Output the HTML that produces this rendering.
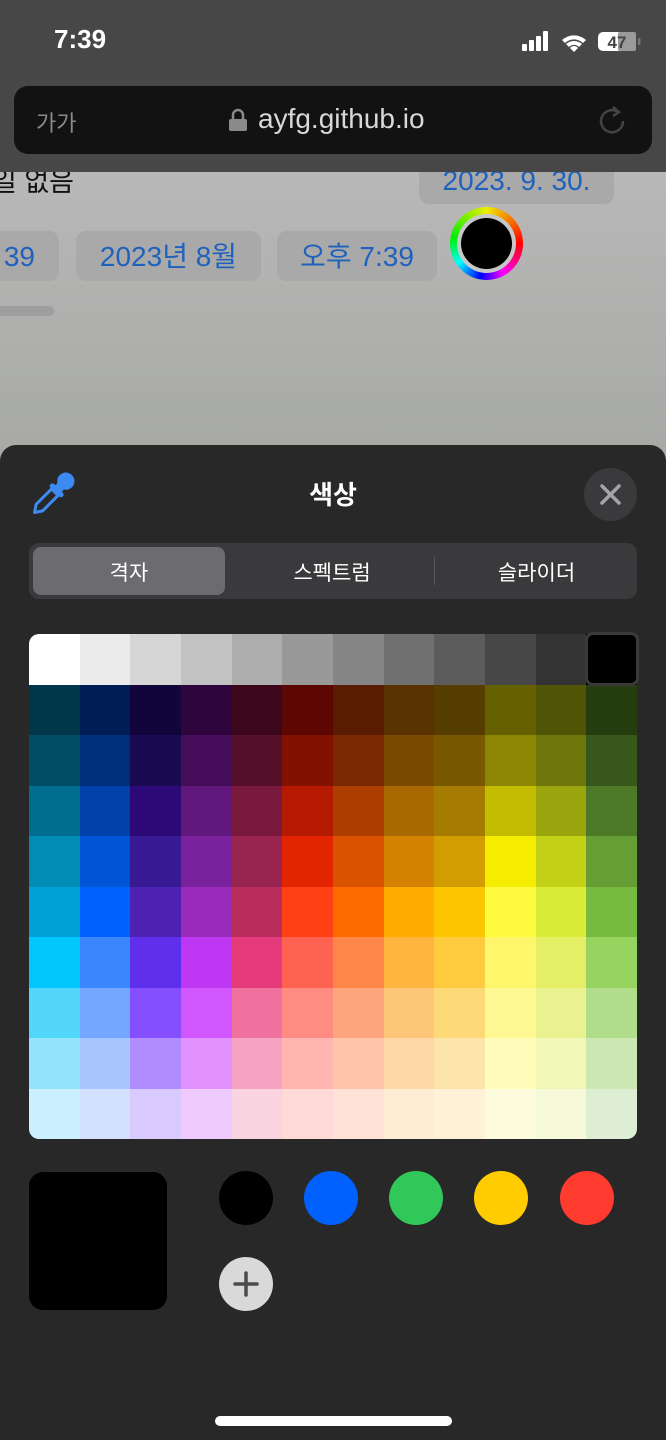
<!DOCTYPE html>
<html><head><meta charset="utf-8">
<style>
*{margin:0;padding:0;box-sizing:border-box}
body{width:666px;height:1440px;overflow:hidden;position:relative;background:#282828;font-family:"Liberation Sans","Noto Sans CJK KR",sans-serif}
.abs{position:absolute}
.btn{position:absolute;background:#a9a9a9;border-radius:10px;color:#1f62bd;font-size:28px;text-align:center}
#grid{position:absolute;left:29px;top:634px;width:608px;height:505px;border-radius:10px;overflow:hidden;display:grid;grid-template-columns:repeat(12,1fr);grid-template-rows:repeat(10,1fr)}
.c{position:absolute;width:54px;height:54px;border-radius:50%;top:1171px}
</style></head><body>
<div class="abs" style="left:0;top:172px;width:666px;height:290px;background:linear-gradient(#b8b8b8,#a7a9a5)"></div>
<div class="abs" style="left:-8px;top:160px;color:#111;font-size:27px">일 없음</div>
<div class="btn" style="left:419px;top:150px;width:195px;height:54px;line-height:62px">2023. 9. 30.</div>
<div class="btn" style="left:-20px;top:231px;width:79px;height:50px;line-height:52px;text-align:right;padding-right:24px">39</div>
<div class="btn" style="left:76px;top:231px;width:185px;height:50px;line-height:52px">2023년 8월</div>
<div class="btn" style="left:277px;top:231px;width:160px;height:50px;line-height:52px">오후 7:39</div>
<div class="abs" style="left:450px;top:207px;width:73px;height:73px;border-radius:50%;background:conic-gradient(#ee0 0deg,#f00 90deg,#f0f 150deg,#00f 190deg,#0ff 235deg,#0e0 280deg,#ee0 360deg)"></div>
<div class="abs" style="left:457px;top:214px;width:59px;height:59px;border-radius:50%;background:#c8c8c8"></div>
<div class="abs" style="left:461px;top:218px;width:51px;height:51px;border-radius:50%;background:#000"></div>
<div class="abs" style="left:-5px;top:306px;width:59px;height:10px;border-radius:5px;background:#9e9e9e"></div>
<div class="abs" style="left:0;top:0;width:666px;height:172px;background:#474747"></div>
<div class="abs" style="left:54px;top:24px;color:#fff;font-size:26px;font-weight:bold">7:39</div>
<svg class="abs" style="left:520px;top:30px" width="125" height="24" viewBox="0 0 125 24">
<rect x="2" y="14" width="5" height="7" rx="1" fill="#fff"/><rect x="9" y="10" width="5" height="11" rx="1" fill="#fff"/><rect x="16" y="6" width="5" height="15" rx="1" fill="#fff"/><rect x="23" y="1" width="5" height="20" rx="1" fill="#fff"/>
<path d="M42 10a18 18 0 0 1 24 0l-3 3a13 13 0 0 0-18 0zM46 14a12 12 0 0 1 16 0l-3 3a7 7 0 0 0-10 0zM50 18a5 5 0 0 1 8 0l-4 4z" fill="#fff"/>
<rect x="78" y="2" width="38" height="19" rx="5" fill="#fff"/><rect x="98" y="2" width="18" height="19" rx="2" fill="#9a9a9a"/><rect x="118" y="8" width="2.5" height="7" rx="1" fill="#777"/>
<text x="97" y="18" text-anchor="middle" font-size="17" font-weight="bold" fill="#444" font-family="Liberation Sans">47</text>
</svg>
<div class="abs" style="left:14px;top:86px;width:638px;height:68px;background:#121212;border-radius:14px"></div>
<div class="abs" style="left:36px;top:106px;color:#8a8a8a;font-size:22px">가가</div>
<svg class="abs" style="left:228px;top:108px" width="20" height="24"><path d="M5 11V7a5 5 0 0 1 10 0v4" stroke="#8a8a8a" stroke-width="2.5" fill="none"/><rect x="1" y="11" width="18" height="12" rx="2" fill="#8a8a8a"/></svg>
<div class="abs" style="left:258px;top:103px;color:#d8d8d8;font-size:28px">ayfg.github.io</div>
<svg class="abs" style="left:596px;top:104px" width="32" height="32"><path d="M22 8a11 11 0 1 0 5 9" stroke="#444" stroke-width="2.5" fill="none"/><path d="M17 3l6 5-6 4" stroke="#444" stroke-width="2.5" fill="none"/></svg>
<div class="abs" style="left:0;top:445px;width:666px;height:995px;background:#282828;border-radius:16px 16px 0 0"></div>
<svg class="abs" style="left:0;top:445px" width="100" height="100" viewBox="0 445 100 100">
<g transform="translate(52,495) rotate(45) scale(1.15)" fill="#3d8bf0">
<circle cx="0" cy="-17" r="7.5"/>
<rect x="-4" y="-14" width="8" height="8"/>
<rect x="-7.5" y="-8" width="15" height="4.5" rx="2"/>
<path d="M-4-3.5h8v19l-4 6-4-6z" fill="none" stroke="#3d8bf0" stroke-width="2.6" stroke-linejoin="round"/>
</g>
</svg>
<div class="abs" style="left:0;top:475px;width:666px;text-align:center;color:#fff;font-size:26px;font-weight:bold">색상</div>
<div class="abs" style="left:584px;top:468px;width:53px;height:53px;border-radius:50%;background:#3a3a3c"></div>
<svg class="abs" style="left:584px;top:468px" width="53" height="53"><path d="M18 18l17 17M35 18L18 35" stroke="#a4a4a8" stroke-width="3.5" stroke-linecap="round"/></svg>
<div class="abs" style="left:29px;top:543px;width:608px;height:56px;background:#3a3a3c;border-radius:10px"></div>
<div class="abs" style="left:33px;top:547px;width:192px;height:48px;background:#6c6c70;border-radius:8px"></div>
<div class="abs" style="left:434px;top:557px;width:1px;height:28px;background:#5a5a5e"></div>
<div class="abs" style="left:33px;top:557px;width:192px;text-align:center;color:#fff;font-size:21px">격자</div>
<div class="abs" style="left:230px;top:557px;width:204px;text-align:center;color:#fff;font-size:21px">스펙트럼</div>
<div class="abs" style="left:436px;top:557px;width:201px;text-align:center;color:#fff;font-size:21px">슬라이더</div>
<div id="grid"></div>
<div class="abs" style="left:585px;top:632px;width:54px;height:54px;border:3px solid #3a3a3a;border-radius:8px;background:#000"></div>
<div class="abs" style="left:29px;top:1172px;width:138px;height:138px;background:#000;border-radius:14px"></div>
<div class="c" style="left:219px;background:#000"></div>
<div class="c" style="left:304px;background:#0061fe"></div>
<div class="c" style="left:389px;background:#32c759"></div>
<div class="c" style="left:474px;background:#ffcc02"></div>
<div class="c" style="left:560px;background:#ff3b30"></div>
<div class="c" style="left:219px;top:1257px;background:#d9d9d9"></div>
<svg class="abs" style="left:219px;top:1257px" width="54" height="54"><path d="M27 16v22M16 27h22" stroke="#4a4a4a" stroke-width="3.5" stroke-linecap="round"/></svg>
<div class="abs" style="left:215px;top:1416px;width:237px;height:10px;border-radius:5px;background:#fff"></div>
<script>
var cols="fff ebebeb d6d6d6 c2c2c2 adadad 999999 858585 707070 5c5c5c 474747 333333 000000 00374a 011d57 11053b 2e063d 3c071b 5c0701 5a1c00 583300 563d00 666100 4f5504 263e0f 004d65 012f7b 1a0a52 450d59 551029 831100 7b2900 7a4a00 785800 8c8602 6f760a 38571a 016e8f 0042a9 2c0977 61187c 791a3d b51a00 ad3e00 a96800 a67b01 c4bc00 9ba50e 4e7a27 008cb4 0056d6 371a94 7a219e 99244f e22400 da5100 d38301 d19d01 f5ec00 c3d117 669d34 00a1d8 0061fd 4d22b2 982abc b92d5d ff4015 ff6a00 ffab01 fcc700 fefb41 d9ec37 76bb40 01c7fc 3a87fd 5e30eb be38f3 e63b7a fe6250 fe8648 feb43f fecb3e fff76b e4ef65 96d35f 52d6fc 74a7ff 864ffd d357fe ee719e ff8c82 fea57d fec777 fed977 fff994 eaf28f b1dd8b 93e3fc a7c6ff b18cfe e292fe f4a4c0 ffb5af ffc5ab fed9a8 fde4a8 fffbb9 f1f7b7 cde8b5 cbf0ff d2e2fe d8c9fe efcaff f9d3e0 ffdad8 ffe2d6 feecd4 fef1d5 fdfbdd f6fadb deeed4".split(" ");
var g=document.getElementById("grid");cols.forEach(function(c){var d=document.createElement("div");d.style.background="#"+c;g.appendChild(d);});
</script>
</body></html>
